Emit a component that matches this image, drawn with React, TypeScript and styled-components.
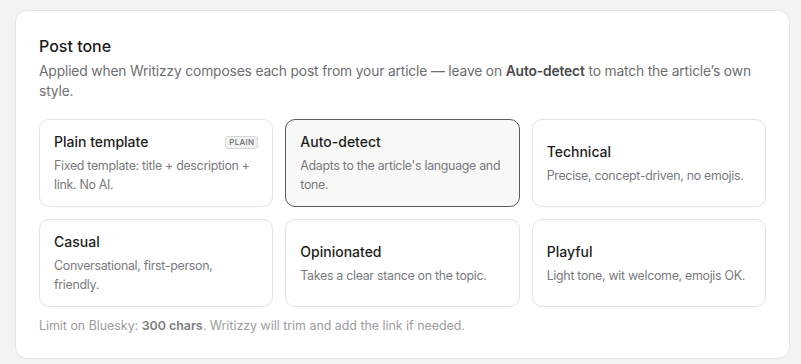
import styled, { createGlobalStyle } from 'styled-components';

const GlobalStyle = createGlobalStyle`
  html, body {
    margin: 0;
    padding: 0;
    background: #f3f3f2;
  }
  body {
    font-family: Inter, "Noto Sans", "Liberation Sans", sans-serif;
    -webkit-font-smoothing: antialiased;
  }
`;

const Page = styled.div`
  padding: 10px 11px 7px 15px;
`;

const Panel = styled.section`
  background: #fff;
  border: 1px solid #e4e4e2;
  border-radius: 12px;
  padding: 24px 23px 24px 23px;
`;

const Title = styled.h2`
  margin: 0;
  font-size: 16px;
  line-height: 22px;
  font-weight: 500;
  color: #1b1b1b;
`;

const Lead = styled.p`
  margin: 4px 0 0;
  font-size: 13.8px;
  letter-spacing: -0.15px;
  line-height: 20px;
  color: #6e6e72;

  strong {
    color: #4a4a4e;
    font-weight: 600;
  }
`;

const Grid = styled.div`
  display: grid;
  grid-template-columns: repeat(3, 1fr);
  gap: 12px;
  margin-top: 18px;
`;

const Card = styled.button<{ $selected?: boolean }>`
  display: flex;
  flex-direction: column;
  justify-content: center;
  gap: 4px;
  min-height: 87px;
  box-sizing: border-box;
  padding: 12px 14px;
  text-align: left;
  font: inherit;
  cursor: pointer;
  border-radius: 10px;
  border: 1px solid ${(p) => (p.$selected ? '#5c5c5f' : '#e3e3e1')};
  background: ${(p) => (p.$selected ? '#f8f8f7' : '#fff')};
`;

const CardHead = styled.div`
  display: flex;
  align-items: center;
  justify-content: space-between;
`;

const CardTitle = styled.span`
  font-size: 14px;
  line-height: 20px;
  font-weight: 500;
  color: #1e1e20;
`;

const Badge = styled.span`
  font-size: 8px;
  line-height: 11px;
  font-weight: 500;
  letter-spacing: 0.3px;
  color: #6a6a6e;
  background: #f2f2f1;
  border: 1px solid #d6d6d4;
  border-radius: 3px;
  padding: 0 3px;
`;

const CardDesc = styled.span`
  font-size: 12.4px;
  letter-spacing: -0.3px;
  line-height: 19px;
  color: #7a7a7e;
`;

const Note = styled.p`
  margin: 11px 0 0;
  font-size: 12.4px;
  line-height: 16px;
  color: #9c9c9f;

  strong {
    color: #7e7e82;
    font-weight: 600;
  }
`;

const tones = [
  { id: 'plain', title: 'Plain template', desc: 'Fixed template: title + description + link. No AI.', badge: 'PLAIN' },
  { id: 'auto', title: 'Auto-detect', desc: "Adapts to the article's language and tone." },
  { id: 'technical', title: 'Technical', desc: 'Precise, concept-driven, no emojis.' },
  { id: 'casual', title: 'Casual', desc: 'Conversational, first-person, friendly.' },
  { id: 'opinionated', title: 'Opinionated', desc: 'Takes a clear stance on the topic.' },
  { id: 'playful', title: 'Playful', desc: 'Light tone, wit welcome, emojis OK.' },
];

export default function App() {
  const selected = 'auto';

  return (
    <Page>
      <GlobalStyle />
      <Panel>
        <Title>Post tone</Title>
        <Lead>
          Applied when Writizzy composes each post from your article — leave on{' '}
          <strong>Auto-detect</strong> to match the article’s own style.
        </Lead>
        <Grid>
          {tones.map((t) => (
            <Card key={t.id} $selected={t.id === selected}>
              <CardHead>
                <CardTitle>{t.title}</CardTitle>
                {t.badge && <Badge>{t.badge}</Badge>}
              </CardHead>
              <CardDesc>{t.desc}</CardDesc>
            </Card>
          ))}
        </Grid>
        <Note>
          Limit on Bluesky: <strong>300 chars</strong>. Writizzy will trim and add the link if needed.
        </Note>
      </Panel>
    </Page>
  );
}
